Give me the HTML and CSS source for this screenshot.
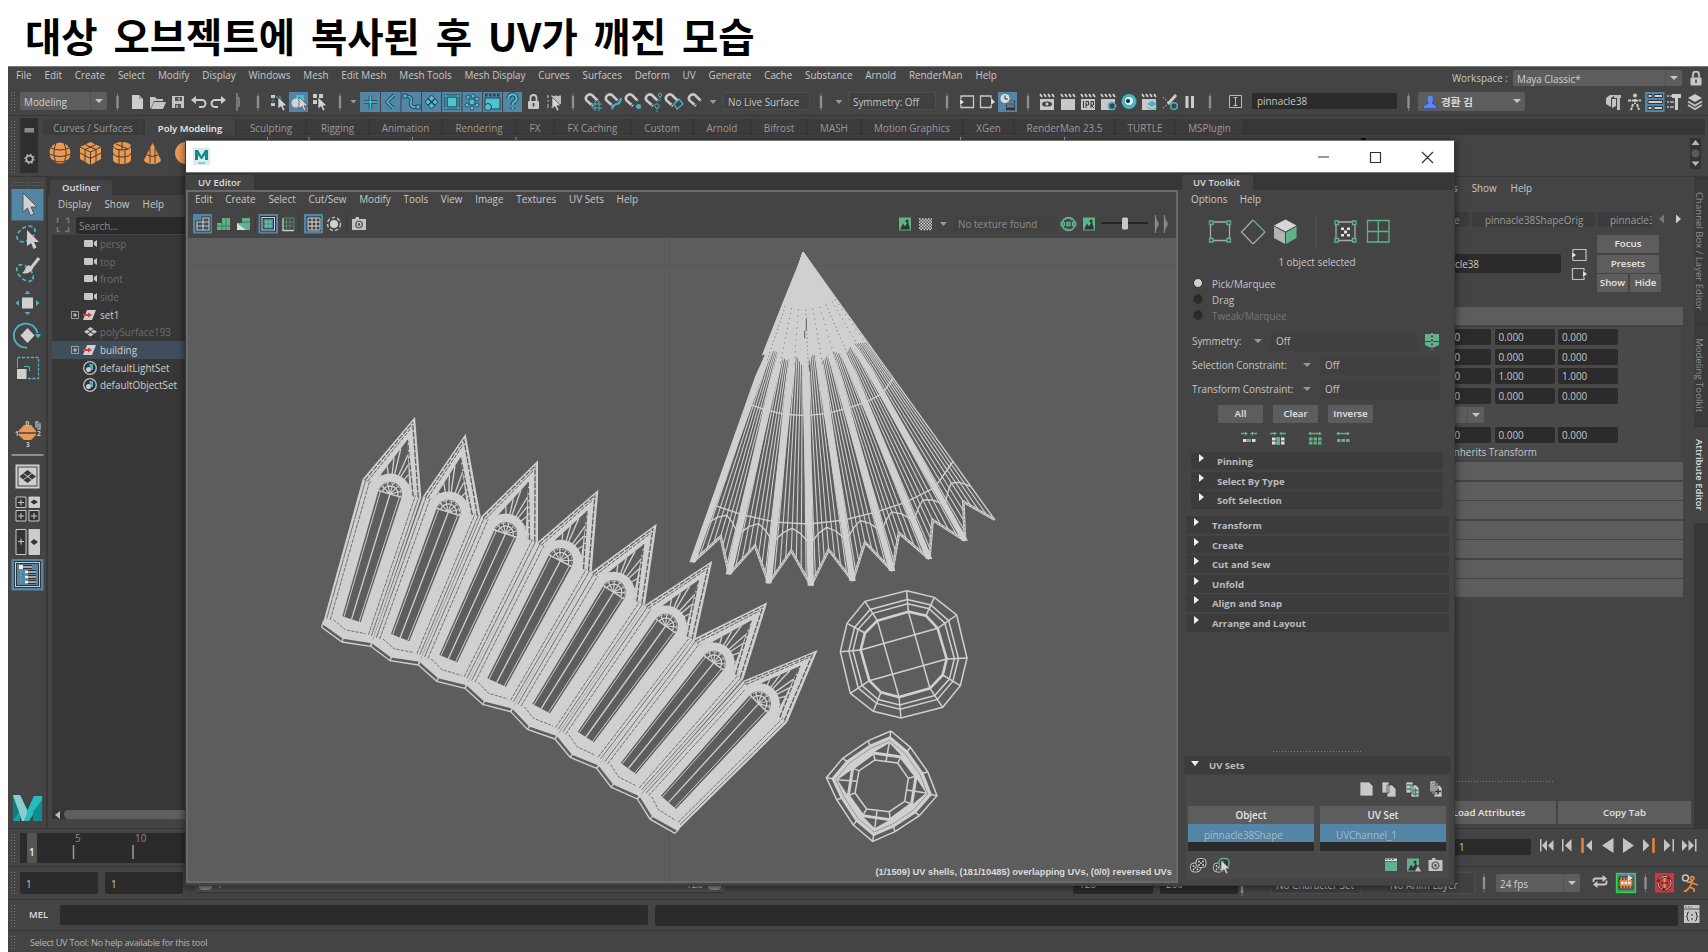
FILE: index.html
```html
<!DOCTYPE html>
<html lang="ko">
<head>
<meta charset="utf-8">
<title>UV Editor</title>
<link rel="stylesheet" href="styles.css">
</head>
<body>
<svg class="defs" width="0" height="0">
  <defs>
    <g id="sep"><path d="M0-9V9" stroke="#777" stroke-width="1"/><path d="M0-6V6" stroke="#909090" stroke-width="2.4"/></g>
    <g id="cursor"><path d="M0 0V12L3 9.5 5 14 7 13 5 8.800H9Z" fill="#d4d4d4" stroke="#3a3a3a" stroke-width=".6"/></g>
    <g id="magnet"><path d="M8 6L1.500 .5A4 4 0 0 1 7-5L13 1" fill="none" stroke="#c8c8c8" stroke-width="2.600" transform="translate(-3 1)"/><path d="M2.500 7L5.500 4.500M8 3L10.500 .5" stroke="#444" stroke-width="1"/></g>
    <g id="clap"><path d="M0-3H14V8H0Z" fill="#c8c8c8"/><path d="M0-8L2-5M4-8L6-5M8-8L10-5M12-8L14-5" stroke="#d0d0d0" stroke-width="1.800"/></g>
    <g id="cam"><rect width="9" height="7" rx="1" fill="#c6c6c6"/><path d="M13 0V7L10 5V2Z" fill="#c6c6c6"/></g>
    <g id="plus"><rect x=".5" y=".5" width="7" height="7" fill="none" stroke="#999"/><path d="M2 4H6M4 2V6" stroke="#ccc"/></g>
    <g id="xform"><path d="M4 0H13L9 10H0Z" fill="#d0cfcb"/><path d="M0 5H6" stroke="#d04040" stroke-width="2"/><path d="M5 2.500L9 5 5 7.500Z" fill="#d04040"/></g>
    <g id="setic"><circle cx="7" cy="7" r="6.300" fill="#333" stroke="#c0c0c0" stroke-width="1.300"/><path d="M6 3H10V9H8Z" fill="#45b3c2"/><circle cx="5.500" cy="8.500" r="2.500" fill="#ccc"/></g>
    <g id="mesh4" fill="#c8c8c8"><path d="M6.500 0L9.500 2 6.500 4 3.500 2ZM3 2.800L6 4.800 3 6.800 0 4.800ZM10 2.800L13 4.800 10 6.800 7 4.800ZM6.500 5.500L9.500 7.500 6.500 9.500 3.500 7.500Z"/></g>
    <g id="photo"><path d="M0-4H3L4-6H7V-4H14V7H0Z" fill="#c4c4c4"/><circle cx="7" cy="1.500" r="4" fill="#666"/><circle cx="7" cy="1.500" r="2.400" fill="#ddd"/><circle cx="7" cy="1.500" r="1.400" fill="#555"/></g>
    <g id="pic"><rect width="12" height="13" fill="#5fb389"/><path d="M1 12L4 6 6 9 9 4 11 12Z" fill="#333"/><circle cx="8" cy="3.500" r="1.500" fill="#333"/></g>
    <g id="lock"><rect y="6" width="11" height="8" rx="1" fill="#c8c8c8"/><path d="M2.500 6V3A3 3 0 0 1 8.500 3V6" fill="none" stroke="#c8c8c8" stroke-width="1.800"/><path d="M5.500 8V11.500" stroke="#444" stroke-width="1.600"/></g>
    <g id="dice"><rect x="0" y="4" width="10" height="9" rx="3.500" fill="#3a3a3a" stroke="#c8c8c8"/><circle cx="3" cy="7" r=".9" fill="#ddd"/><circle cx="7" cy="7" r=".9" fill="#ddd"/><circle cx="5" cy="8.700" r=".9" fill="#ddd"/><circle cx="3" cy="10.500" r=".9" fill="#ddd"/><circle cx="7" cy="10.500" r=".9" fill="#ddd"/></g>
    <g id="vtx" fill="none" stroke="#5fb389" stroke-width="1.300"><path d="M4 1.500H18M4 20H18M1.500 4V18M20.500 4V18" stroke="#aaa"/><path d="M.5.5H4V4H.5ZM18 .5H21.500V4H18ZM.5 18H4V21.500H.5ZM18 18H21.500V21.500H18Z"/></g>
  </defs>
</svg>

<h1 class="title">대상 오브젝트에 복사된 후 UV가 깨진 모습</h1>

<div class="app">
  <header class="menubar">
    <nav class="menu main-menu"><span>File</span><span>Edit</span><span>Create</span><span>Select</span><span>Modify</span><span>Display</span><span>Windows</span><span>Mesh</span><span>Edit Mesh</span><span>Mesh Tools</span><span>Mesh Display</span><span>Curves</span><span>Surfaces</span><span>Deform</span><span>UV</span><span>Generate</span><span>Cache</span><span>Substance</span><span>Arnold</span><span>RenderMan</span><span>Help</span></nav>
    <div class="workspace"><span>Workspace :</span><div class="combo ws-combo"><span>Maya Classic*</span><i></i></div>
      <svg width="12" height="15"><use href="#lock" x=".5" y=".5"/></svg></div>
  </header>

  <div class="statusline">
    <div class="grip-v"></div>
    <div class="combo mode"><span>Modeling</span><i></i></div>
    <svg width="616" height="29" viewBox="107 87 616 29">
      <use href="#sep" x="117.500" y="102"/>
      <path d="M132 95H139L143 99V109H132Z" fill="#ccc"/><path d="M139 95V99H143" fill="#999"/>
      <path d="M150 97H155L157 99H163V101H154L151 108H150Z" fill="#c4c4c4"/><path d="M154 102H166L163 109H151Z" fill="#c4c4c4"/>
      <path d="M172 96H184V108H172Z" fill="#c4c4c4"/><path d="M175 97H182V101H175ZM175 104H181V108H175Z" fill="#555"/><path d="M179 97.500V100.500M177 105V108" stroke="#ddd"/>
      <path d="M194 100H202A3 3 0 0 1 202 107H199" fill="none" stroke="#ccc" stroke-width="2"/><path d="M191 100L196 96V104Z" fill="#ccc"/>
      <path d="M223 100H215A3 3 0 0 0 215 107H218" fill="none" stroke="#ccc" stroke-width="2"/><path d="M226 100L221 96V104Z" fill="#ccc"/>
      <path d="M237 93V111M238.500 97L239.500 102 238.500 107" fill="none" stroke="#888" stroke-width="1.500"/>
      <use href="#sep" x="258" y="102"/>
      <path d="M271 95H275V98H271ZM271 103H275V106H271Z" fill="#ccc"/><path d="M273 97V104M276 97H281V102" stroke="#45b3c2" fill="none" stroke-dasharray="2 1"/><use href="#cursor" x="278" y="97"/>
      <rect x="289" y="92" width="19" height="20" fill="#5285a6"/><path d="M296 95H304V103H296Z" fill="#48bccb"/><circle cx="296" cy="103" r="4.500" fill="#d4d4d4"/><use href="#cursor" x="299" y="97"/>
      <path d="M313 94H317V98H313ZM319 94H323V98H319ZM313 100H317V104H313Z" fill="#ccc"/><use href="#cursor" x="318" y="97"/>
      <use href="#sep" x="340" y="102"/><path d="M350.500 100H356.500L353.500 103.500Z" fill="#999"/>
      <path d="M360 92H380V112H360ZM381 92H400.500V112H381ZM401.500 92H421V112H401.500ZM422 92H441V112H422ZM442 92H461.500V112H442ZM462.500 92H482V112H462.500ZM483 92H502V112H483ZM503 92H522V112H503Z" fill="#5285a6"/>
      <g fill="none" stroke="#2b4250" stroke-width="3.400"><path d="M364 102H377M370.500 95V109M394 95L387 102 393 108M405 96Q413 96 411 102T418 107"/></g>
      <g fill="none" stroke="#4cc4d0" stroke-width="1.600"><path d="M364 102H377M370.500 95V109M394 95L387 102 393 108M405 96Q413 96 411 102T418 107"/></g>
      <path d="M403 94H407V98H403ZM416 105H420V109H416Z" fill="#4cc4d0" stroke="#2b4250"/>
      <path d="M431.500 95L438 102 431.500 109 425 102Z" fill="#4cc4d0" stroke="#2b4250"/><path d="M428 98.500L435 105.500M435 98.500L428 105.500" stroke="#2b4250" stroke-width="1.500"/>
      <path d="M448 98H456V106H448Z" fill="#4cc4d0"/><path d="M446 94V110M458 94V110M444 96H460M444 108H460" stroke="#2b4250" stroke-width="3"/><path d="M446 94V110M458 94V110M444 96H460M444 108H460" stroke="#4cc4d0" stroke-width="1"/>
      <g stroke="#2b4250" fill="#4cc4d0" stroke-width=".8"><circle cx="472" cy="102" r="3"/><circle cx="468" cy="97" r="2"/><circle cx="473" cy="96" r="2"/><circle cx="477" cy="99" r="2"/><circle cx="477" cy="105" r="2"/><circle cx="472" cy="108" r="2"/><circle cx="467" cy="105" r="2"/></g>
      <path d="M485 98H500V109H485Z" fill="#4cc4d0" stroke="#2b4250"/><path d="M485 95H500" stroke="#2b4250" stroke-width="3" stroke-dasharray="2.500 1.500"/><circle cx="488" cy="107" r="3.500" fill="#4cc4d0" stroke="#2b4250"/>
      <path d="M508.500 99A4 4 0 1 1 514 102Q512.500 103 512.500 105M512.500 107V109.500" fill="none" stroke="#2b4250" stroke-width="4"/><path d="M508.500 99A4 4 0 1 1 514 102Q512.500 103 512.500 105M512.500 107V109.500" fill="none" stroke="#4cc4d0" stroke-width="2"/>
      <use href="#lock" x="528" y="95"/>
      <path d="M547 96H562M547 107H553M548 96V107" stroke="#bbb" stroke-dasharray="2 2"/><path d="M552 96H561V104H552Z" fill="#bbb"/><use href="#cursor" x="552" y="97"/>
      <use href="#sep" x="573" y="102"/>
      <use href="#magnet" x="588" y="99"/><path d="M592 104H602M592 108H602M595 101V111M599 101V111" stroke="#45b3c2"/>
      <use href="#magnet" x="608" y="99"/><path d="M612 109Q614 104 617 104T621 98" stroke="#45b3c2" stroke-width="2.200" fill="none"/>
      <use href="#magnet" x="628" y="99"/><circle cx="638.500" cy="106.500" r="2.500" fill="#45b3c2"/>
      <use href="#magnet" x="648" y="99"/><circle cx="660" cy="95" r="1.700" fill="none" stroke="#45b3c2"/><circle cx="657" cy="106" r="2.200" fill="none" stroke="#45b3c2"/><path d="M657 108V112M660 97V102" stroke="#45b3c2" stroke-dasharray="1.500 1"/>
      <use href="#magnet" x="668" y="99"/><path d="M674 104L679 99 683 104 677 109Z" fill="none" stroke="#45b3c2" stroke-width="1.300"/>
      <use href="#magnet" x="691" y="99"/><path d="M709.500 100H716.500L713 104Z" fill="#999"/>
    </svg>
    <div class="field live">No Live Surface</div>
    <svg width="38" height="29" viewBox="810 87 38 29"><use href="#sep" x="821" y="102"/><path d="M835.500 100H842.500L839 104Z" fill="#999"/></svg>
    <div class="field sym">Symmetry: Off</div>
    <svg width="316" height="29" viewBox="936 87 316 29">
      <use href="#sep" x="947" y="102"/>
      <g fill="none" stroke="#c8c8c8" stroke-width="1.300"><path d="M961 99V96H973.500V107.500H961V105M991 98V96H980.500V107.500H991V105"/></g>
      <path d="M960 99L964 102 960 105ZM991 98L995 102 991 105Z" fill="#ddd"/>
      <rect x="998" y="92" width="19" height="20" fill="#5285a6"/><path d="M1006 102H1015M1006 106H1015M1006 109H1015" stroke="#333" stroke-width="2.500"/><path d="M1007 102H1014M1007 106H1014" stroke="#bbb"/><circle cx="1005" cy="98.500" r="4.600" fill="#ddd"/><path d="M1005 95.500V99H1008" stroke="#333" fill="none"/>
      <use href="#sep" x="1028" y="102"/>
      <use href="#clap" x="1040" y="102"/><ellipse cx="1047" cy="104" rx="5" ry="2.600" fill="#444"/><circle cx="1047" cy="104" r="1.500" fill="#ccc"/>
      <use href="#clap" x="1061" y="102"/>
      <use href="#clap" x="1081" y="102"/><path d="M1083.500 101V108M1086 108V101.500H1088.500V105H1086M1091 108V101.500H1093.500V105H1091L1094 108" stroke="#333" fill="none"/>
      <use href="#clap" x="1101" y="102"/><circle cx="1112" cy="106" r="3.500" fill="#444" stroke="#45b3c2" stroke-width="2" stroke-dasharray="2 .8"/>
      <circle cx="1129" cy="101.500" r="7.500" fill="#48b5c4"/><circle cx="1129" cy="101" r="4" fill="#e4f0f0"/><circle cx="1128" cy="101" r="2" fill="#222"/>
      <use href="#clap" x="1142" y="102"/><path d="M1147 104L1152 101 1157 104 1152 107Z" fill="#45b3c2"/><path d="M1147 107L1152 110 1157 107" stroke="#45b3c2" fill="none"/>
      <path d="M1163 97L1169 103M1163 108L1168 104" stroke="#45b3c2" stroke-width="1.300" stroke-dasharray="1.500 1.500"/><path d="M1168 104L1176 95" stroke="#ccc" stroke-width="3"/><circle cx="1174" cy="106" r="3.300" fill="none" stroke="#45b3c2" stroke-width="1.500"/>
      <path d="M1187 96V108M1192.500 96V108" stroke="#ccc" stroke-width="3"/>
      <use href="#sep" x="1210" y="102"/>
      <path d="M1229.500 95.500H1241.500V107.500H1229.500Z" fill="#3c3c3c" stroke="#bbb"/><path d="M1235.500 97V106M1233.500 97.500H1237.500M1233.500 105.500H1237.500" stroke="#bbb" fill="none"/>
    </svg>
    <div class="input objname">pinnacle38</div>
    <svg width="21" height="29" viewBox="1397 87 21 29"><use href="#sep" x="1408.500" y="102"/></svg>
    <div class="combo user"><svg width="14" height="15" viewBox="0 0 14 15"><path d="M4 4A3.300 3.500 0 0 1 10.500 4Q10.500 8 9 9L13.500 12V14.500H.5V12L5.500 9Q4 8 4 4Z" fill="#5c88ee" stroke="#26459c" stroke-width=".6"/></svg><span>경환 김</span><i></i></div>
    <svg width="183" height="29" viewBox="1525 87 183 29">
      <path d="M1606 98L1610 95H1615L1611 98V107L1606 104ZM1612 99H1616V106L1612 108Z" fill="#c4c4c4"/><path d="M1614 95H1621V98H1614ZM1617 98H1620V110H1617Z" fill="#bbb"/>
      <circle cx="1635" cy="95.500" r="2" fill="#ccc"/><path d="M1628 100.500H1641M1635 99V104M1633 104L1631 110M1637 104L1639 110" stroke="#ccc" stroke-width="2" stroke-dasharray="3 .7" fill="none"/>
      <rect x="1645" y="92" width="19.500" height="20" fill="#5285a6"/><g fill="#d0d0d0" stroke="#333"><path d="M1654 94.500H1662.500V97.500H1654ZM1648 100.500H1662.500V103.500H1648ZM1654 106.500H1662.500V109.500H1654ZM1648 94.500H1652V97.500H1648ZM1648 106.500H1652V109.500H1648Z"/></g>
      <path d="M1667 96H1674M1667 102H1674M1667 107H1674" stroke="#bbb" stroke-width="1.500" stroke-dasharray="2 1 5 0"/><path d="M1672 94H1681V98H1672ZM1675 98H1678V110H1675Z" fill="#ccc"/>
      <path d="M1695 94L1702 98 1695 102 1688 98Z" fill="#ccc"/><path d="M1688 101.500L1695 105.500 1702 101.500M1688 105L1695 109 1702 105" fill="none" stroke="#bbb" stroke-width="2"/>
    </svg>
  </div>

  <div class="shelf">
    <div class="grip-v"></div>
    <svg class="shelf-side" width="18" height="55" viewBox="20 118 18 55"><path d="M24.500 128H34V132.500H24.500Z" fill="#8a8a8a"/><circle cx="29.500" cy="159" r="3.200" fill="none" stroke="#bbb" stroke-width="1.500"/><circle cx="29.500" cy="159" r="4.600" fill="none" stroke="#bbb" stroke-width="1.200" stroke-dasharray="1.600 2"/></svg>
    <div class="shelf-main">
      <div class="tabs">
        <span class="t1">Curves / Surfaces</span><span class="t2 on">Poly Modeling</span><span class="t3">Sculpting</span><span class="t4">Rigging</span><span class="t5">Animation</span><span class="t6">Rendering</span><span class="t7">FX</span><span class="t8">FX Caching</span><span class="t9">Custom</span><span class="t10">Arnold</span><span class="t11">Bifrost</span><span class="t12">MASH</span><span class="t13">Motion Graphics</span><span class="t14">XGen</span><span class="t15">RenderMan 23.5</span><span class="t16">TURTLE</span><span class="t17">MSPlugin</span>
      </div>
      <svg width="1662" height="41" viewBox="43 135 1662 41">
        <g fill="#e89a55"><circle cx="60" cy="153" r="10.500"/><path d="M90.500 142L101 147V159L90.500 165 80 159V147Z"/><path d="M113 146A9 4 0 0 1 131 146V160A9 4 0 0 1 113 160Z"/><path d="M152.500 143L161 160A8.500 4 0 0 1 144 160Z"/><circle cx="186" cy="153" r="11"/></g>
        <g fill="none" stroke="#4a3a2c" stroke-width="1"><path d="M51 148Q60 152 69 148M49.500 154Q60 159 70.500 154M52 160Q60 164 68 160M56 143Q52 153 56 163M64 143Q68 153 64 163M80 147L90.500 152 101 147M90.500 152V165M80 153L90.500 158.500 101 153M85 144.500L96 149.500V162M96 144.500L85 149.500V162M113 146A9 4 0 0 0 131 146M113 153A9 4 0 0 0 131 153M119 149V164M125 149V164M122 142V150M116 144L128 149M150 148V163M155 148V163M147 155Q152 158 158 155"/></g>
        <path d="M267.500 137V141M309 137V141M412.500 137V141M516 137V141M960.500 137V141M1064.500 137V141" stroke="#aaa"/><path d="M1361 139H1366" stroke="#111" stroke-width="2"/>
        <rect x="1690" y="138" width="11" height="31" fill="#333"/><path d="M1695.500 140L1699.500 145H1691.500ZM1695.500 166L1699.500 161.500H1691.500Z" fill="#b8b8b8"/><circle cx="1695.500" cy="153.500" r="4" fill="#5a5a5a"/>
      </svg>
    </div>
  </div>

  <main class="work">
    <aside class="toolbox">
      <svg width="39" height="651" viewBox="8 177 39 651">
        <path d="M11 182.500H43M11 185.500H43" stroke="#6a6a6a" stroke-dasharray="1.200 1.800"/>
        <rect x="11.500" y="189" width="32" height="31.500" fill="#5285a6"/><path d="M23 193V212L27.500 208 30.500 215.500 34 214 31 207H37Z" fill="#d0d0d0" stroke="#444" stroke-width=".8"/>
        <ellipse cx="26" cy="234" rx="10" ry="6.500" transform="rotate(-35 26 234)" fill="none" stroke="#45b3c2" stroke-width="1.800" stroke-dasharray="4 2.500"/><path d="M27 230V246L31 243 33.500 249 36.500 247.500 34 242H39Z" fill="#d0d0d0"/>
        <ellipse cx="25" cy="273" rx="10" ry="6" transform="rotate(45 25 273)" fill="none" stroke="#45b3c2" stroke-width="1.800" stroke-dasharray="4 2.500"/><path d="M39 258L31 268" stroke="#ccc" stroke-width="3"/><path d="M29 265L33 269Q28 275 22 273Q25 271 26 267Z" fill="#ccc"/>
        <rect x="22" y="297.500" width="11" height="11" fill="#d0d0d0"/><path d="M27.500 290.500L30.500 294H24.500ZM27.500 315L30.500 312H24.500ZM15.500 303L19 300V306ZM39.500 303L36 300V306Z" fill="#45b3c2"/>
        <path d="M27.500 328L34.500 335.500 27.500 343 20.500 335.500Z" fill="#d0d0d0"/><path d="M27 347.500A12 12 0 1 1 37.500 333" fill="none" stroke="#45b3c2" stroke-width="1.800"/><path d="M35 334H41L38 338.500Z" fill="#45b3c2"/>
        <path d="M17.500 357.500H38.500V378.500H28" fill="none" stroke="#45b3c2" stroke-width="1.300" stroke-dasharray="3 1.500"/><path d="M17.500 358V368M24 366.500H29.500V371" stroke="#45b3c2" fill="none"/><rect x="17" y="369" width="9.500" height="10" fill="#d0d0d0"/>
        <path d="M24 425H31L36 431V435L31 440H24L18.500 435V431Z" fill="#e89a55"/><path d="M18 433H36" stroke="#333" stroke-width="1.300"/><path d="M35 421H39V428H35ZM37 423H41V430H37Z" fill="#aaa" stroke="#444" stroke-width=".5"/>
        <g class="tiny"><text x="25.500" y="426">0</text><text x="15" y="435.500">1</text><text x="37" y="436">2</text><text x="26" y="446.500">3</text></g>
        <path d="M11.500 455H43.500" stroke="#8e8e8e" stroke-width="2"/>
        <rect x="15.500" y="464.500" width="24" height="24" fill="#d0d0d0"/><rect x="18" y="467" width="19" height="19" fill="none" stroke="#444"/><path d="M27.500 470L31.500 473 27.500 476 23.500 473ZM23 473.500L27 476.500 23 479.500 19.500 476.500ZM32 473.500L36 476.500 32 479.500 28.500 476.500ZM27.500 477L31.500 480 27.500 483 23.500 480Z" fill="#3a3a3a"/>
        <g fill="#333" stroke="#c8c8c8"><path d="M16 497H26V507.500H16ZM16 510.500H26V521H16ZM29 510.500H39V521H29Z"/><path d="M29 497H39.500V507.500H29Z" fill="#ccc"/><path d="M16 529.500H26V554.500H16Z"/><path d="M29 529.500H39.500V554.500H29Z" fill="#ccc"/></g>
        <path d="M18 502.500H24M21 499.500V505.500M18 516H24M21 513V519M31 516H37M34 513V519M18 541.500H24M21 538.500V544.500" stroke="#ccc"/><path d="M34 499.500L38 502 34 504.500 30.500 502ZM34 539L38 542 34 545 30.500 542Z" fill="#333"/>
        <rect x="11.500" y="559" width="32" height="31.500" fill="#5285a6"/><rect x="15.500" y="562.500" width="24" height="24" fill="none" stroke="#333" stroke-width="3"/><rect x="15.500" y="562.500" width="24" height="24" fill="none" stroke="#ccc"/>
        <path d="M20 567H32M25 572H36M25 577H36M25 582H36" stroke="#333" stroke-width="4"/><path d="M20 567H32M25 572H36M25 577H36M25 582H36" stroke="#ccc" stroke-width="1.500"/><path d="M19 565H23V569H19ZM25 570.500H28V573.500H25ZM25 575.500H28V578.500H25ZM25 580.500H28V583.500H25Z" fill="#eee"/><path d="M21 569V583" stroke="#aaa" stroke-dasharray="1 1"/>
        <path d="M13 795L20 795 27.500 810 34 796H42V821H33V812L29 821H22L20 815V821H13Z" fill="#12a3a6"/><path d="M13 795H20L28 812 24 821H22Z" fill="#8ccdd0"/><path d="M34 796H42V800L29 821H25L27 812Z" fill="#28bcbc"/><path d="M42 800V821H33V812Z" fill="#0e8c92"/><path d="M13 797L19 812 13 821Z" fill="#0c7d84"/>
      </svg>
    </aside>
    <section class="outliner">
      <div class="dock-tabs"><span class="dock-tab out-tab">Outliner</span></div>
      <nav class="menu out-menu"><span>Display</span><span>Show</span><span>Help</span></nav>
      <div class="search"><svg width="14" height="16" viewBox="0 0 14 16"><path d="M3 1.500H1.500V6M1.500 10V14.500H4M10 1.500H12.500V6M12.500 10V14.500H9" fill="none" stroke="#777" stroke-width="1.500"/></svg><div class="input">Search...</div></div>
      <ul class="tree">
        <li class="dim"><svg width="30" height="14"><use href="#cam" x="15" y="3"/></svg>persp</li>
        <li class="dim"><svg width="30" height="14"><use href="#cam" x="15" y="3"/></svg>top</li>
        <li class="dim"><svg width="30" height="14"><use href="#cam" x="15" y="3"/></svg>front</li>
        <li class="dim"><svg width="30" height="14"><use href="#cam" x="15" y="3"/></svg>side</li>
        <li><svg width="30" height="14"><use href="#plus" x="2" y="3"/><use href="#xform" x="14" y="2"/></svg>set1</li>
        <li class="dim"><svg width="30" height="14"><use href="#mesh4" x="15" y="2"/></svg>polySurface193</li>
        <li class="sel"><svg width="30" height="14"><use href="#plus" x="2" y="3"/><use href="#xform" x="14" y="2"/></svg>building</li>
        <li><svg width="30" height="14"><use href="#setic" x="14" y="0"/></svg>defaultLightSet</li>
        <li><svg width="30" height="14"><use href="#setic" x="14" y="0"/></svg>defaultObjectSet</li>
      </ul>
      <div class="hscroll"><b></b><i></i></div>
    </section>
    <div class="void"></div>
    <section class="attr">
      <nav class="menu attr-menu"><span>s</span><span>Show</span><span>Help</span></nav>
      <div class="attr-tabs"><span class="a1">e</span><span class="a2">pinnacle38ShapeOrig</span><span class="a3">pinnacle3</span>
        <svg width="36" height="14"><path d="M7 2.500V11.500L2 7Z" fill="#777"/><path d="M19 2.500V11.500L24 7Z" fill="#ccc"/></svg></div>
      <div class="attr-head">
        <div class="input">pinnacle38</div>
        <svg width="18" height="34"><g fill="none" stroke="#c0c0c0" stroke-width="1.200"><path d="M2 4V1.500H15V12.500H2V10M13 23V20.500H1.500V31.500H13V29"/></g><path d="M1 4L5 7 1 10ZM12 23L16 26 12 29Z" fill="#ddd"/></svg>
        <div class="attr-btns"><button>Focus</button><button>Presets</button><div><button>Show</button><button>Hide</button></div></div>
      </div>
      <div class="bar"></div>
      <div class="attr-box">
        <div class="nums"><span>0.000</span><span>0.000</span><span>0.000</span></div>
        <div class="nums"><span>0.000</span><span>0.000</span><span>0.000</span></div>
        <div class="nums"><span>1.000</span><span>1.000</span><span>1.000</span></div>
        <div class="nums"><span>0.000</span><span>0.000</span><span>0.000</span></div>
        <div class="combo rot"><i></i></div>
        <div class="nums"><span>0.000</span><span>0.000</span><span>0.000</span></div>
        <div class="inherit">Inherits Transform</div>
      </div>
      <div class="bars"><div class="bar"></div><div class="bar"></div><div class="bar"></div><div class="bar"></div><div class="bar"></div><div class="bar"></div><div class="bar"></div></div>
      <div class="attr-foot"><div class="dots"></div><div class="foot-btns"><button>Load Attributes</button><button>Copy Tab</button></div></div>
    </section>
    <aside class="side-tabs"><span class="s1">Channel Box / Layer Editor</span><span class="s2">Modeling Toolkit</span><span class="s3 on">Attribute Editor</span></aside>
  </main>

  <div class="timeline">
    <div class="grip-v"></div>
    <div class="ticks"><svg width="1380" height="30" viewBox="20 833 1380 30"><rect x="27" y="833" width="10" height="30" fill="#555"/><path d="M73.500 845V859M133 845V859" stroke="#999" stroke-width="1.500"/><g class="tick-num"><text x="75" y="842">5</text><text x="135" y="842">10</text></g><text class="cur" x="29" y="856">1</text></svg></div>
    <div class="input curframe">1</div>
    <svg width="177" height="38" viewBox="1531 829 177 38">
      <g fill="#c4c4c4"><path d="M1540 839H1541.500V851.500H1540ZM1547 840V851L1542 845.500ZM1553.500 840V851L1548 845.500ZM1562 839H1563.500V851.500H1562ZM1571.500 839V851.500L1565 845.500ZM1592 840V851L1586 845.500ZM1613.500 838V853L1602 845.500ZM1623 838V853L1634 845.500ZM1643 839V851.500L1649.500 845.500ZM1664 839V851.500L1670.500 845.500ZM1672.500 839H1674V851.500H1672.500ZM1682 840V851L1687.500 845.500ZM1688.500 840V851L1694 845.500ZM1695 839H1696.500V851.500H1695Z"/></g>
      <path d="M1582.500 838V853M1653.500 838V853" stroke="#e8843a" stroke-width="2.500"/>
    </svg>
  </div>

  <div class="range">
    <div class="grip-v"></div>
    <div class="input r1">1</div><div class="input r2">1</div>
    <div class="slider"><i></i><span>1</span><span class="end">120</span><i></i></div>
    <div class="input r3">120</div><div class="input r4">200</div>
    <svg width="33" height="32" viewBox="1238 868 33 32"><use href="#sep" x="1242" y="888"/></svg>
    <div class="field r5">No Character Set</div><div class="field r6">No Anim Layer</div>
    <svg width="21" height="32" viewBox="1475 868 21 32"><use href="#sep" x="1484" y="884"/></svg>
    <div class="combo fps"><span>24 fps</span><i></i></div>
    <svg width="128" height="32" viewBox="1580 868 128 32">
      <path d="M1593.500 883V881.500Q1593.500 879.500 1595.500 879.500H1603M1606.500 881.500V883.500Q1606.500 885.500 1604.500 885.500H1597" fill="none" stroke="#c8c8c8" stroke-width="1.800"/><path d="M1602.500 876L1607 879.500 1602.500 883ZM1597.500 882L1593 885.500 1597.500 889Z" fill="#c8c8c8"/>
      <rect x="1616.500" y="874.500" width="19" height="19" fill="#5285a6" stroke="#28e028" stroke-width="1.300"/><path d="M1619 878H1633V890H1619Z" fill="#dd8a48" stroke="#333"/><path d="M1619 880H1633M1619 888H1633" stroke="#333" stroke-width="1.500" stroke-dasharray="1.500 1.500"/><path d="M1621 884H1631" stroke="#eee" stroke-width="2.500" stroke-dasharray="2.500 1"/><path d="M1628 876L1633 879 1628 882Z" fill="#ddd"/>
      <use href="#sep" x="1645.500" y="884"/>
      <rect x="1655" y="874" width="19" height="19.500" fill="#d63438"/><circle cx="1664.500" cy="884" r="6.500" fill="none" stroke="#413030" stroke-width="2.500"/><circle cx="1664.500" cy="884" r="6.500" fill="none" stroke="#ccc" stroke-width="1" stroke-dasharray="9 3"/><path d="M1664.500 879V889" stroke="#e89a55" stroke-width="2"/><path d="M1661 884H1668" stroke="#333" stroke-width="1.200"/>
      <circle cx="1685.500" cy="879" r="3" fill="none" stroke="#c8c8c8" stroke-width="1.400"/><path d="M1694 879.500A1.800 1.800 0 1 1 1694 879.400M1687 883H1692L1690 888 1694 890V893M1690 888L1686 892H1684M1692 884L1698 886" fill="none" stroke="#e8843a" stroke-width="1.800"/>
    </svg>
  </div>

  <div class="command">
    <div class="grip-v"></div><label>MEL</label><div class="input mel"></div><div class="input melout"></div>
    <svg width="18" height="20"><rect x="1" y="0" width="15.500" height="18" fill="#c4c4c4"/><path d="M1 4H17" stroke="#555"/><path d="M2 2H9" stroke="#555" stroke-dasharray="1.500 1.500"/><path d="M6 7Q4 7 4.500 9T3 11.500Q5 11.500 4.500 13.500T6 16M12 7Q14 7 13.500 9T15 11.500Q13 11.500 13.500 13.500T12 16M9 9V11M9 13V15" fill="none" stroke="#333"/></svg>
  </div>
  <footer class="help"><div class="grip-v"></div><span>Select UV Tool: No help available for this tool</span></footer>
</div>

<div class="window">
  <div class="titlebar">
    <svg width="18" height="18" viewBox="193 148 18 18"><rect x="193" y="148" width="17" height="17" fill="#d8eceb"/><path d="M195 150H198L201.500 156 205 150H208V160H205V155L202 159H201L198 155V160H195Z" fill="#0c8a8f"/><path d="M198 163H205" stroke="#7bbcbc" stroke-width="1.500"/></svg>
    <svg width="130" height="20" viewBox="1310 146 130 20"><g fill="none" stroke="#333" stroke-width="1.200"><path d="M1318 156H1329M1370.500 151.500H1380.500V161.500H1370.500ZM1422 151L1433 162M1433 151L1422 162"/></g></svg>
  </div>
  <div class="panes">
    <section class="uved">
      <div class="dock-tabs"><span class="dock-tab uv-tab">UV Editor</span></div>
      <div class="uvframe">
        <nav class="menu uv-menu"><span>Edit</span><span>Create</span><span>Select</span><span>Cut/Sew</span><span>Modify</span><span>Tools</span><span>View</span><span>Image</span><span>Textures</span><span>UV Sets</span><span>Help</span></nav>
        <div class="uvbar">
          <svg width="190" height="30" viewBox="188 209 190 30">
            <path d="M193 214H212V233.500H193ZM258.500 214H278V233.500H258.500ZM304 214H323V233.500H304Z" fill="#5285a6"/>
            <g fill="none" stroke="#333" stroke-width="3"><path d="M197 222H203V218H209V230H197ZM203 222V230M197 226H209M203 222H209"/></g>
            <g fill="none" stroke="#d8d8d8" stroke-width="1.100"><path d="M197 222H203V218H209V230H197ZM203 222V230M197 226H209M203 222H209"/></g>
            <path d="M217 223H222V218H230V230H217ZM237 223H242V218H250V230H237Z" fill="#5fb389"/><path d="M217 226H230M226 218V230M222 222V230M242 222H250" stroke="#3c7a5e"/><path d="M237 223L246 230H237Z" fill="#ddd"/>
            <path d="M255.500 214V233M299.500 214V233M346.500 214V233" stroke="#3a3a3a"/>
            <rect x="262" y="217.500" width="12.500" height="12.500" fill="#5285a6" stroke="#2c2c2c" stroke-width="3"/><rect x="262" y="217.500" width="12.500" height="12.500" fill="none" stroke="#d8d8d8"/><path d="M264.500 222H272M264.500 226H272M266.500 220V228M270 220V228" stroke="#5fd39a"/>
            <path d="M283 218V230.500H294" stroke="#ccc" fill="none" stroke-width="1.300"/><path d="M283 218H294V230M286.500 219V229M290 219V229M284 222H293M284 226H293" stroke="#5b8a72" fill="none"/>
            <rect x="307.500" y="217.500" width="12.500" height="12.500" fill="#444" stroke="#2c2c2c" stroke-width="2"/><path d="M308 218H320V230H308ZM308 222H320M308 226H320M312 218V230M316 218V230" stroke="#ddd" fill="none"/>
            <circle cx="334" cy="224" r="4" fill="#d0d0d0"/><circle cx="334" cy="224" r="6.500" fill="none" stroke="#bbb" stroke-width="1.500" stroke-dasharray="3.500 2"/>
            <use href="#photo" x="352" y="223"/>
          </svg>
          <svg width="60" height="30" viewBox="893 209 60 30"><use href="#pic" x="899" y="217.500"/><path d="M919 219H932M919 222H932M919 225H932M919 228H932" stroke="#ddd" stroke-width="1.500" stroke-dasharray="1.500 1.500"/><path d="M920.500 220.500H932M920.500 223.500H932M920.500 226.500H932M920.500 229.500H932" stroke="#ddd" stroke-width="1.500" stroke-dasharray="1.500 1.500"/><path d="M940 222H947L943.500 226Z" fill="#999"/></svg>
          <div class="field tex">No texture found</div>
          <svg width="119" height="30" viewBox="1057 209 119 30"><circle cx="1068.500" cy="224" r="6.500" fill="none" stroke="#5fb389" stroke-width="1.500"/><path d="M1060.500 224H1077" stroke="#5fb389" stroke-width="4.500" stroke-dasharray="4.500 1.200"/><path d="M1062 224H1076" stroke="#35634c" stroke-width="1.200" stroke-dasharray="2 3.700"/><path d="M1065 219.500L1069 218 1072 220.500M1065 228.500L1070 230" stroke="#5fb389" fill="none"/><use href="#pic" x="1083" y="217.500"/><path d="M1101 223H1148" stroke="#262626" stroke-width="2"/><rect x="1122" y="217.500" width="6" height="12" rx="1.500" fill="#c8c8c8"/><path d="M1155.500 215V233M1164.500 215V233" stroke="#888" stroke-width="1.300"/><path d="M1156 218L1159 224 1156 230ZM1165 218L1168 224 1165 230Z" fill="#888"/></svg>
        </div>
        <div class="canvas">
          <svg id="uvmesh" width="988" height="643" viewBox="188 239 988 643"></svg>
          <p class="shells">(1/1509) UV shells, (181/10485) overlapping UVs, (0/0) reversed UVs</p>
        </div>
      </div>
    </section>
    <section class="kit">
      <div class="dock-tabs"><span class="dock-tab kit-tab">UV Toolkit</span></div>
      <nav class="menu kit-menu"><span>Options</span><span>Help</span></nav>
      <svg width="274" height="42" viewBox="1180 210 274 42">
        <use href="#vtx" x="1209" y="220.500"/><path d="M1253 244L1241.500 232 1253 220" fill="none" stroke="#aaa" stroke-width="1.300"/><path d="M1253 220L1265 232" stroke="#5fb389" stroke-width="1.300"/><path d="M1265 232L1253 244" stroke="#aaa" stroke-width="1.300"/>
        <path d="M1285.500 219.500L1296.500 225.500 1285.500 231.500 1274 225.500Z" fill="#d6d6d6"/><path d="M1274 226.500L1285 232.500V244L1274 238Z" fill="#b4b4b4"/><path d="M1286 232.500L1296.500 226.500V238L1286 244Z" fill="#5fb389"/>
        <path d="M1316 216V248" stroke="#525252"/><use href="#vtx" x="1334.500" y="220.500"/><path d="M1341 227.500H1344V230H1341ZM1347 227.500H1350V230H1347ZM1344 230.500H1347V233.500H1344ZM1341 234H1344V236.500H1341ZM1347 234H1350V236.500H1347Z" fill="#e0e0e0"/>
        <path d="M1367.500 220.500H1389V242H1367.500ZM1378.300 220.500V242M1367.500 231.500H1389" fill="none" stroke="#5fb389" stroke-width="1.300"/>
      </svg>
      <p class="selinfo">1 object selected</p>
      <ul class="radios"><li class="on"><i></i>Pick/Marquee</li><li><i></i>Drag</li><li class="dim"><i></i>Tweak/Marquee</li></ul>
      <div class="opt o1"><label>Symmetry:</label><b></b><div class="field">Off</div><svg width="16" height="17" viewBox="0 0 16 17"><path d="M1 1H7V8H1ZM9 1H15V8H9ZM1 9H7V15L1 12ZM9 9H15V12L9 15Z" fill="#5fb389"/><path d="M8 0V16.500" stroke="#ddd" stroke-dasharray="2.500 1.500"/></svg></div>
      <div class="opt o2"><label>Selection Constraint:</label><b></b><div class="field">Off</div></div>
      <div class="opt o2"><label>Transform Constraint:</label><b></b><div class="field">Off</div></div>
      <div class="trio"><button>All</button><button>Clear</button><button>Inverse</button></div>
      <svg class="growicons" width="274" height="20" viewBox="1180 428 274 20">
        <g stroke="#5fb389" stroke-width="1.300" fill="#5fb389"><path d="M1241 433.500H1246M1252 433.500H1257M1270 433.500H1275M1281 433.500H1286M1310 433.500H1320M1338 433.500H1348"/><path d="M1245 431.500L1248 433.500 1245 435.500ZM1253 431.500L1250 433.500 1253 435.500ZM1274 431.500L1277 433.500 1274 435.500ZM1282 431.500L1279 433.500 1282 435.500ZM1311 431.500L1308 433.500 1311 435.500ZM1319 431.500L1322 433.500 1319 435.500ZM1339 431.500L1336 433.500 1339 435.500ZM1347 431.500L1350 433.500 1347 435.500Z" stroke="none"/></g>
        <path d="M1243 440.500H1256M1272 439H1284.500M1272 443H1284.500" stroke="#ddd" stroke-width="3" stroke-dasharray="3.500 1"/><path d="M1247.500 440.500H1251M1276.500 439H1280M1276.500 443H1280M1309 439H1321.500M1309 443H1321.500M1337 440.500H1349.500" stroke="#5fb389" stroke-width="3" stroke-dasharray="3.500 1"/>
      </svg>
      <div class="folds inner"><div>Pinning</div><div>Select By Type</div><div>Soft Selection</div></div>
      <div class="folds"><div>Transform</div><div>Create</div><div>Cut and Sew</div><div>Unfold</div><div>Align and Snap</div><div>Arrange and Layout</div></div>
      <div class="kit-foot">
        <div class="dots"></div>
        <div class="sets-head">UV Sets</div>
        <div class="sets">
          <svg width="263" height="31" viewBox="1186 775 263 31">
            <g fill="#c8c8c8" stroke="#444" stroke-width=".7"><path d="M1360 782H1369L1373 786V796H1360Z"/><path d="M1382 782H1389V793H1382ZM1387 785H1392L1396 789V797H1387Z"/><path d="M1406 782H1413V793H1406ZM1411 785H1416L1419 788V797H1411Z"/><path d="M1430 781H1436V792H1430ZM1432 783H1438V794H1432ZM1434 785H1439L1442 788V797H1434Z"/></g>
            <path d="M1407 785H1411M1407 789H1411M1412.500 790.500H1418M1412.500 794H1418M1415.500 788V796" stroke="#2f8f60" stroke-width="1.300"/><path d="M1435.500 791.500H1441M1438.200 789V794" stroke="#333" stroke-width="1.300"/>
          </svg>
          <div class="tables"><div class="tbl"><b>Object</b><span>pinnacle38Shape</span></div><div class="tbl"><b>UV Set</b><span>UVChannel_1</span></div></div>
          <svg width="263" height="28" viewBox="1186 852 263 28">
            <use href="#dice" x="1190.500" y="860"/><use href="#dice" x="1196" y="855.500"/><use href="#dice" x="1213.500" y="860"/><rect x="1219" y="859.500" width="10" height="9" rx="3.500" fill="#3a3a3a" stroke="#5fb389" stroke-width="1.300"/><circle cx="1223" cy="863" r="1" fill="#5fb389"/><use href="#cursor" x="1221" y="861"/>
            <path d="M1385 862.500H1397V872H1385Z" fill="#5fb389"/><path d="M1385 859.500H1397V862H1385Z" fill="#ddd"/><path d="M1386 860.500H1394" stroke="#444" stroke-dasharray="1.500 1.500"/>
            <use href="#pic" x="1407" y="859.500"/><path d="M1418 866L1422 873H1414Z" fill="#bbb" stroke="#444"/><use href="#photo" x="1428.500" y="865"/>
          </svg>
        </div>
      </div>
    </section>
  </div>
</div>
<script src="mesh.js"></script>
</body>
</html>
```
FILE: styles.css
```css
* { box-sizing: border-box; margin: 0; padding: 0; }
body { width: 1708px; height: 952px; overflow: hidden; background: #fff; position: relative; font: 9.9px/14px "Open Sans", "Noto Sans", "Noto Sans CJK KR", sans-serif; color: #c6c6c6; }
.defs { position: absolute; }
svg { display: block; flex: none; }
ul { list-style: none; }
button { font: 600 9.7px/14px "Open Sans", sans-serif; color: #e4e4e4; background: #5d5d5d; border: 0; border-radius: 1px; text-align: center; white-space: nowrap; }
.title { height: 66px; padding: 0 0 0 25px; font: 700 39.500px/69px "Noto Sans CJK KR", sans-serif; color: #000; white-space: nowrap; word-spacing: 4.700px; }
.app { margin-left: 8px; width: 1700px; height: 886px; background: #444; border-top: 1px solid #777; display: flex; flex-direction: column; }
.app > * { flex: none; display: flex; }
.menu { display: flex; justify-content: space-between; white-space: nowrap; color: #c8c8c8; }
.menubar { height: 20px; align-items: center; justify-content: space-between; padding: 0 6px 0 8px; }
.main-menu { width: 981px; padding-bottom: 4px; }
.workspace { display: flex; align-items: center; padding-top: 2px; }
.workspace > span { margin-right: 7px; width: 54px; white-space: nowrap; }
.workspace svg { margin-left: 8px; }
.combo { display: flex; align-items: center; background: #5d5d5d; border-radius: 2px; color: #d0d0d0; white-space: nowrap; }
.combo span { flex: 1; padding: 1px 0 0 4px; }
.combo i { align-self: stretch; width: 17px; border-left: 1px solid #515151; display: flex; align-items: center; justify-content: center; }
.combo i::before { content: ""; border: 4px solid transparent; border-top: 4.500px solid #c8c8c8; border-bottom: 0; }
.ws-combo { width: 169px; height: 16px; }
.grip-v { flex: none; width: 5px; margin: 4px 5px 3px 2px; background: radial-gradient(circle, #777 .6px, transparent 1px) 0 0/3px 3px; }
.statusline { height: 29px; align-items: center; border-bottom: 1px solid #363636; }
.statusline .grip-v { align-self: stretch; }
.mode { width: 87px; height: 18px; }
.field { height: 18px; border: 1px solid #4d4d4d; background: #404040; border-radius: 2px; padding: 2px 0 0 4px; color: #c6c6c6; white-space: nowrap; }
.live { width: 87px; } .sym { width: 88px; }
.input { background: #2b2b2b; border-radius: 2px; padding-left: 5px; color: #c6c6c6; white-space: nowrap; }
.objname { width: 145px; height: 16px; line-height: 17px; }
.user { width: 107px; height: 19px; padding-left: 5px; font: 700 10.500px/18px "Noto Sans CJK KR", sans-serif; color: #ddd; }
.user i { border: 0; }
.shelf { height: 61px; border-bottom: 1px solid #383838; }
.shelf-side { background: #2f2f2f; margin: 2px 5px 0 0; }
.shelf-main { padding-top: 3px; width: 1662px; }
.tabs { display: flex; gap: 2px; height: 16px; background: #373737; }
.tabs span { background: #3c3c3c; color: #9a9a9a; text-align: center; line-height: 19px; border-radius: 2px 2px 0 0; white-space: nowrap; flex: none; }
.tabs .on { background: #444; color: #eee; font-weight: 600; font-size: 9.500px; }
.t1 { width: 100px; } .t2 { width: 90px; } .t3 { width: 68px; } .t4 { width: 61px; } .t5 { width: 71px; } .t6 { width: 72px; } .t7 { width: 36px; } .t8 { width: 75px; } .t9 { width: 60px; } .t10 { width: 56px; } .t11 { width: 54px; } .t12 { width: 52px; } .t13 { width: 100px; } .t14 { width: 49px; } .t15 { width: 99px; } .t16 { width: 58px; } .t17 { width: 67px; }
.work { height: 651px; }
.toolbox { width: 40px; border-right: 2px solid #383838; }
.outliner { width: 160px; display: flex; flex-direction: column; }
.dock-tabs { height: 16px; flex: none; background: #373737; display: flex; align-items: flex-end; }
.dock-tab { height: 15px; background: #444; border-radius: 2px 2px 0 0; color: #ddd; font-weight: 600; font-size: 9.500px; line-height: 16px; white-space: nowrap; }
.out-tab { margin-left: 2px; width: 62px; padding-left: 12px; }
.outliner .dock-tabs { height: 18px; }
.out-menu { width: 106px; margin: 2px 0 0 10px; }
.search { display: flex; gap: 6px; padding-left: 8px; margin-top: 6px; }
.search .input { width: 110px; height: 17px; padding: 2px 0 0 3px; color: #8d8d8d; }
.tree { margin: 1px 0 0 4px; background: #373737; height: 576px; flex: none; }
.tree li { height: 17.700px; display: flex; align-items: center; gap: 1px; padding-left: 17px; color: #d0d0d0; white-space: nowrap; }
.tree .dim { color: #6d6d6d; }
.tree .sel { background: #404d5b; }
.hscroll { display: flex; align-items: center; height: 9px; margin-left: 4px; padding-left: 3px; background: #333; margin-top: -1px; gap: 4px; flex: none; }
.hscroll b { border: 4px solid transparent; border-right: 5px solid #bbb; border-left: 0; }
.hscroll i { flex: 1; height: 9px; border-radius: 5px 0 0 5px; background: #5f5f5f; }
.void { width: 1192px; background: #444; }
.attr { width: 294px; display: flex; flex-direction: column; }
.attr-menu { width: 79px; margin: 4px 0 0 53px; }
.attr-tabs { display: flex; gap: 3px; margin-top: 17px; height: 15px; }
.attr-tabs span { background: #3c3c3c; color: #9a9a9a; line-height: 16px; overflow: hidden; white-space: nowrap; }
.a1 { width: 69px; padding-left: 54px; } .a2 { width: 123px; padding-left: 13px; } .a3 { width: 54px; padding-left: 12px; }
.attr-tabs svg { margin-left: 2px; }
.attr-head { display: flex; margin-top: 8px; height: 58px; }
.attr-head .input { width: 141px; margin: 19px 0 0 20px; height: 19px; line-height: 20px; padding: 0 82px 0 0; text-align: right; direction: rtl; }
.attr-head svg { margin: 13px 0 0 10px; }
.attr-btns { margin-left: 8px; width: 64px; display: flex; flex-direction: column; gap: 1.500px; }
.attr-btns button { height: 18px; width: 62px; line-height: 18px; }
.attr-btns div { display: flex; gap: 2px; }
.attr-btns div button { width: 31px; }
.bar { height: 18px; width: 283px; background: #5d5d5d; border-radius: 1px; }
.attr-head + .bar { margin-top: 14px; flex: none; }
.attr-box { width: 281px; height: 133px; margin: 2px 0; background: #494949; padding: 2px 0 0 31px; flex: none; }
.nums { display: flex; gap: 3.500px; height: 16px; margin-bottom: 3.500px; }
.nums span { width: 60px; background: #2b2b2b; border-radius: 2px; padding-left: 4px; line-height: 17px; }
.rot { width: 53px; height: 16px; margin-bottom: 3.500px; }
.rot i { margin-left: auto; }
.inherit { padding-left: 20px; line-height: 13px; }
.bars { display: flex; flex-direction: column; gap: 1.500px; }
.attr-foot { margin-top: auto; padding-bottom: 4px; }
.dots { height: 3px; background: radial-gradient(circle, #7c7c7c .6px, transparent 1px) 0 0/3px 3px; }
.attr-foot .dots { width: 100px; margin: 0 0 18px 55px; }
.foot-btns { display: flex; gap: 2px; }
.foot-btns button { height: 23px; width: 133px; }
.foot-btns button:first-child { width: 156px; padding-left: 22px; }
.side-tabs { width: 14px; background: #373737; padding-top: 3px; display: flex; flex-direction: column; gap: 2px; }
.side-tabs span { writing-mode: vertical-rl; background: #3b3b3b; color: #8f8f8f; text-align: center; width: 14px; line-height: 11px; padding-right: 3px; white-space: nowrap; font-size: 9.600px; }
.s1 { height: 143px; } .s2 { height: 100px; } .s3 { height: 96px; }
.side-tabs .on { background: #444; color: #ddd; font-weight: 600; font-size: 9.500px; }
.timeline { height: 39px; border-top: 1px solid #363636; border-bottom: 1px solid #383838; }
.ticks { width: 1380px; background: #2b2b2b; height: 30px; margin-top: 4px; }
.ticks text { font-size: 9.900px; fill: #8c8c8c; } .ticks .cur { fill: #eee; font-weight: 600; }
.tiny text { font: 700 6.500px "Open Sans", sans-serif; fill: #ccc; }
.curframe { width: 91px; margin: 10px 0 0 40px; height: 16px; padding-left: 19px; line-height: 17px; }
.range { height: 33px; border-bottom: 1px solid #363636; align-items: center; }
.range .grip-v, .command .grip-v, .help .grip-v { align-self: stretch; }
.range .input { height: 22px; line-height: 24px; padding-left: 6px; flex: none; }
.r1 { width: 78px; margin-right: 7px; } .r2 { width: 78px; margin-right: 10px; }
.slider { width: 534px; height: 17px; margin-top: 2px; background: #4f4f4f; border: 1px solid #3a3a3a; border-radius: 4px; display: flex; align-items: center; gap: 5px; padding: 0 5px; line-height: 12px; }
.slider i { width: 13px; height: 12px; border-radius: 4px; background: #888; }
.slider .end { margin-left: auto; }
.range .input.r3, .range .input.r4 { line-height: 25px; }
.r3 { width: 80px; margin: 0 7px 0 346px; } .r4 { width: 78px; }
.range .field { height: 22px; line-height: 20px; flex: none; }
.r5 { width: 90px; margin-right: 24px; } .r6 { width: 90px; }
.fps { width: 84px; height: 18px; }
.command { height: 31px; align-items: center; border-bottom: 1px solid #363636; }
.command label { width: 40px; padding-left: 9px; color: #ddd; font-weight: 600; font-size: 9.500px; }
.mel { width: 588px; height: 20px; margin-right: 7px; } .melout { width: 1023px; height: 21px; }
.command svg { margin-left: 5px; }
.help { height: 21px; color: #b4b4b4; font: 9.200px/24px "Open Sans", sans-serif; letter-spacing: -.29px; }
.help span { padding-left: 10px; white-space: nowrap; }

.window { position: absolute; left: 185px; top: 140px; width: 1270px; height: 746px; background: #444; border: 1px solid #3a3a3a; border-top-color: #777; box-shadow: 0 1px 8px rgba(0,0,0,.6); display: flex; flex-direction: column; }
.titlebar { height: 32px; flex: none; background: #fff; border-bottom: 1px solid #777; display: flex; align-items: center; justify-content: space-between; padding: 0 14px 0 7px; }
.panes { flex: 1; display: flex; min-height: 0; padding-top: 1px; background: #373737; }
.uved { width: 992px; display: flex; flex-direction: column; background: #444; }
.uv-tab { width: 68px; padding-left: 12px; }
.uvframe { flex: 1; border: 2px solid #6a6a6a; margin-bottom: 2px; display: flex; flex-direction: column; background: #444; min-height: 0; }
.uv-menu { width: 443px; margin: 0 0 0 7px; height: 17px; flex: none; line-height: 15px; }
.uvbar { height: 29px; display: flex; flex: none; align-items: center; }
.uvbar svg:nth-child(2) { margin-left: auto; }
.tex { width: 104px; color: #8d8d8d; border-color: #434343; background: #414141; height: 16px; padding-top: 0; }
.canvas { flex: 1; background: #5d5d5d; position: relative; min-height: 0; overflow: hidden; }
.shells { position: absolute; right: 4px; bottom: 3px; font: 700 9.300px/12px "Liberation Sans", sans-serif; color: #dcdcdc; white-space: nowrap; }
.kit { flex: 1; display: flex; flex-direction: column; min-width: 0; padding-left: 2px; background: #444; }
.kit .dock-tabs { margin-left: -2px; }
.kit-tab { margin-left: 4px; width: 71px; padding-left: 11px; }
.kit-menu { width: 70px; margin: 2px 0 4px 11px; }
.selinfo { text-align: center; margin: 3px 0 7px; width: 274px; }
.radios li { display: flex; align-items: center; height: 16px; padding-left: 13px; }
.radios i { width: 10px; height: 10px; border-radius: 50%; background: #2b2b2b; border: 1px solid #333; margin: -2px 9px 0 0; }
.radios .on i { background: #d0d0d0; border: 1.500px solid #2b2b2b; }
.radios .dim { color: #777; }
.opt { display: flex; align-items: center; padding-left: 12px; height: 24px; }
.opt label { width: 62px; white-space: nowrap; } .o2 label { width: 111px; }
.o1 { margin-top: 5px; height: 24px; }
.opt b { border: 4px solid transparent; border-top: 4.500px solid #999; border-bottom: 0; margin-right: 9px; }
.opt .field { width: 146px; height: 20px; border: 0; background: #404040; line-height: 17px; padding-left: 5px; }
.o2 .field { width: 120px; }
.o1 svg { margin-left: 7px; }
.trio { display: flex; gap: 10px; padding: 4px 0 0 38px; }
.trio button { width: 45px; height: 18px; line-height: 18px; }
.growicons { margin-top: 5px; }
.folds { display: flex; flex-direction: column; gap: 1.500px; margin: 7px 0 0 6px; width: 263px; font-weight: 700; font-size: 9.500px; color: #bdbdbd; }
.folds div { height: 18px; background: #3c3c3c; border-radius: 2px; padding: 3px 0 0 8px; display: flex; }
.folds div::before { content: ""; height: 0; border: 4.500px solid transparent; border-left: 5px solid #eee; border-right: 0; margin: -1px 13px 0 0; }
.inner { margin: 4px 0 0 11px; width: 252px; }
.kit-foot { margin-top: auto; padding: 0 0 6px 4px; }
.kit-foot .dots { width: 90px; margin: 0 0 3px 88px; height: 3px; }
.sets-head { width: 266px; height: 18px; background: #3c3c3c; border-radius: 2px; display: flex; padding: 3px 0 0 7px; font-weight: 700; font-size: 9.500px; color: #bdbdbd; }
.sets-head::before { content: ""; height: 0; border: 4.500px solid transparent; border-top: 5px solid #eee; border-bottom: 0; margin: 2px 10px 0 0; }
.sets { margin: 1px 0 0 2px; width: 263px; background: #494949; }
.tables { display: flex; gap: 6px; padding-left: 2px; height: 45px; }
.tbl { width: 126px; background: #2b2b2b; }
.tbl b { display: block; height: 18px; background: #5d5d5d; text-align: center; font-weight: 600; line-height: 19px; color: #e4e4e4; }
.tbl span { display: block; height: 18px; background: #5285a6; padding-left: 16px; line-height: 22px; color: #a9bac4; }
```
FILE: mesh.js
```javascript
// Builds the UV wireframe shown on the canvas.
(function () {
  var LIGHT = '#d0d0d0', DARK = '#5d5d5d', out = [];
  function lerp(a, b, t) { return [a[0] + (b[0] - a[0]) * t, a[1] + (b[1] - a[1]) * t]; }
  function d(pts) { return 'M' + pts.map(function (p) { return p[0].toFixed(1) + ' ' + p[1].toFixed(1); }).join('L'); }
  function fill(pts, c) { out.push('<path d="' + d(pts) + 'Z" fill="' + (c || LIGHT) + '"/>'); }
  function line(pts, w, c, dash) {
    out.push('<path d="' + d(pts) + '" fill="none" stroke="' + (c || LIGHT) + '" stroke-width="' + (w || 3) + '"' + (dash ? ' stroke-dasharray="' + dash + '"' : '') + '/>');
  }
  function loop(pts, w, c) { line(pts.concat([pts[0]]), w, c); }
  function group(x, y, draw) { out.push('<g transform="translate(' + x + ' ' + y + ') scale(.33333)">'); draw(); out.push('</g>'); }

  out.push('<path d="M188 266.500H1176M669.500 239V882" stroke="#575757"/>');

  // Wall panels: base left, left shoulder, peak, right shoulder, base right, then the four window corners.
  var panels = [
    [[35,685],[158,240],[315,53],[334,295],[182,742],[205,275],[275,295],[152,670],[97,652]],
    [[182,742],[340,290],[467,104],[512,352],[325,798],[380,328],[450,350],[298,727],[243,705]],
    [[325,798],[514,352],[684,184],[684,430],[465,868],[553,393],[620,415],[442,790],[388,768]],
    [[465,868],[682,430],[865,272],[845,520],[602,938],[717,468],[785,503],[588,863],[532,838]],
    [[602,938],[843,520],[1040,374],[1005,618],[735,1020],[880,560],[942,600],[720,943],[667,915]],
    [[735,1020],[1005,618],[1207,485],[1155,725],[860,1108],[1037,660],[1097,702],[852,1030],[803,998]],
    [[860,1108],[1150,720],[1372,610],[1300,840],[982,1200],[1182,770],[1240,813],[978,1125],[932,1092]],
    [[982,1200],[1300,845],[1523,753],[1432,970],[1095,1303],[1320,888],[1372,940],[1098,1230],[1053,1190]]
  ];
  group(310, 400, function () {
    panels.forEach(function (p) {
      var bl = p[0], ls = p[1], pk = p[2], rs = p[3], br = p[4], tl = p[5], tr = p[6], hr = p[7], hl = p[8], i;
      var c = lerp(tl, tr, .5), up = 1 / Math.hypot(ls[0] - bl[0], ls[1] - bl[1]);
      var ax = [(ls[0] - bl[0]) * up, (ls[1] - bl[1]) * up];
      function lift(pt, n) { return [pt[0] + ax[0] * n, pt[1] + ax[1] * n]; }
      var mid = lift(lerp(bl, br, .45), -19);
      fill([lift(bl, 10), ls, rs, lift(br, 10), lift(mid, 10)]);
      line([bl, mid, br], 4);
      line([bl, lift(bl, 20)], 4); line([mid, lift(mid, 20)], 4); line([br, lift(br, 20)], 4);
      line([lift(lerp(bl, br, .18), 34), lift(mid, 38), lift(lerp(bl, br, .84), 30)], 2.5, DARK, '9 4');
      [.05, .12, .9, .96].forEach(function (t, k) {
        line([lift(lerp(bl, br, t), 30), lerp(ls, rs, t)], 2.5, DARK, k === 1 || k === 2 ? '12 3' : '60 2');
      });
      // gable
      fill([ls, pk, rs]);
      var ai = lerp(pk, c, .3);
      line([lerp(ls, c, .08), lerp(pk, c, .07)], 3.5, DARK, '16 4');
      line([lerp(ls, c, .17), lerp(pk, c, .14)], 3, DARK, '12 4');
      line([lerp(rs, c, .1), lerp(pk, c, .09)], 4, DARK, '16 4');
      line([lerp(rs, c, .26), lerp(pk, c, .3)], 4, DARK, '16 4');
      var l = lerp(ai, lerp(tl, ls, .4), .95), r = lerp(ai, lerp(tr, rs, .4), .95);
      fill([ai, l, r], DARK);
      for (i = 0; i <= 4; i++) { line([c, lerp(l, ai, i / 5)], 4); line([c, lerp(r, ai, i / 5.5)], 4); }
      // arch
      var rad = Math.hypot(tr[0] - tl[0], tr[1] - tl[1]) / 2, a0 = Math.atan2(tl[1] - tr[1], tl[0] - tr[0]), arc = [], outer = [], a;
      for (i = 0; i <= 12; i++) {
        a = a0 + Math.PI * i / 12;
        arc.push([c[0] + Math.cos(a) * rad, c[1] + Math.sin(a) * rad]);
        outer.push([c[0] + Math.cos(a) * (rad + 27), c[1] + Math.sin(a) * (rad + 25)]);
      }
      fill(outer); fill(arc, DARK);
      arc.forEach(function (pt, n) { if (n % 2 === 0) line([c, pt], 3.5); });
      line(arc.map(function (pt) { return lerp(c, pt, .66); }), 4);
      line(arc.map(function (pt) { return lerp(c, pt, .92); }), 3, LIGHT, '5 4');
      // window opening
      fill([tl, tr, hr, hl], DARK);
      line([tl, tr], 4);
      line([c, lerp(hl, hr, .5)], 4);
      line([lerp(tl, tr, .09), lerp(hl, hr, .09)], 3); line([lerp(tl, tr, .91), lerp(hl, hr, .91)], 3);
    });
  });

  // Spire
  group(680, 240, function () {
    var apex = [369,40];
    var tips = [[38,970],[147,1006],[266,1033],[393,1040],[518,1026],[637,996],[748,960],[855,905],[944,842]];
    var vals = [[122,893],[225,920],[334,935],[446,932],[555,910],[657,882],[758,843],[850,788]];
    var i, j, t;
    fill([apex, [310,185], [245,350], [285,335], [320,365], [345,345], [372,390], [400,345], [430,365], [455,335], [495,350], [515,315], [560,310], [455,165]]);
    for (i = 0; i < 8; i++) {
      for (j = 1; j <= 7; j++) {
        t = j / 8;
        line([apex, t < .5 ? lerp(tips[i], vals[i], t * 2) : lerp(vals[i], tips[i + 1], t * 2 - 1)], 3.3);
      }
      line([tips[i], vals[i], tips[i + 1]], 8);
      line([tips[i], vals[i], tips[i + 1]], 1.5, DARK, '8 4');
      [.49, .815].forEach(function (k) { line([lerp(apex, tips[i], k), lerp(apex, tips[i + 1], k * (i === 7 ? .96 : 1))], 4); });
      var a = lerp(apex, tips[i], .875), b = lerp(apex, tips[i + 1], .875), m = lerp(apex, vals[i], .925);
      line([a, lerp(a, m, .55), m, lerp(b, m, .55), b].map(function (p, n) { return n === 1 || n === 3 ? [p[0], p[1] - 6] : p; }), 4);
    }
    tips.forEach(function (p, n) {
      if (n === 8) { line([apex, p], 4); return; }
      var q = lerp(apex, p, .4);
      fill([[apex[0] - 4, apex[1] + 60], [apex[0] + 4, apex[1] + 60], [q[0] + 11, q[1]], [p[0] + 9, p[1]], [p[0] - 10, p[1]], [q[0] - 11, q[1]]]);
    });
    for (i = 0; i < 9; i++) {
      line([lerp(apex, lerp(tips[i], vals[Math.min(i, 7)], .4), .18), lerp(apex, lerp(tips[i], vals[Math.min(i, 7)], .4), .36)], 2.5, DARK, '3 ' + (9 + i % 3 * 3));
    }
    line([[379,240],[379,275]], 3, DARK); line([[374,275],[374,298]], 3, DARK); line([[389,375],[389,398]], 3, DARK);
  });

  // Round cap and square base
  group(800, 570, function () {
    var o = [[320,65],[403,85],[470,138],[501,267],[481,350],[428,415],[303,447],[220,427],[151,373],[121,248],[141,163],[195,97]];
    var n = [[325,128],[378,140],[413,178],[440,270],[428,318],[390,358],[297,384],[243,370],[208,335],[182,243],[195,192],[232,155]];
    function ring(t) { return o.map(function (p, i) { return lerp(p, n[i], t); }); }
    loop(o, 4.5); loop(ring(.42), 4.5); loop(ring(.62), 4.5); loop(n, 8);
    o.forEach(function (p, i) { line([p, n[i]], 4.5); });
    [[0,5],[11,6],[9,2],[8,3]].forEach(function (e) { line([n[e[0]], n[e[1]]], 4.5); });

    var q = [[273,486],[331,535],[383,608],[411,680],[358,740],[285,788],[218,817],[160,768],[110,692],[79,626],[128,568],[205,515]];
    var mid = [245,652];
    loop(q, 4.5);
    q.forEach(function (p) { line([p, lerp(p, mid, .12)], 4.5); });
    fill(q.map(function (p) { return lerp(p, mid, .09); }));
    loop(q.map(function (p) { return lerp(p, mid, .17); }), 1.5, DARK);
    // corner pockets between the frame and the octagon
    fill([[268,522],[222,550],[306,562]], DARK);
    fill([[378,672],[348,626],[335,708]], DARK);
    fill([[224,778],[188,742],[270,752]], DARK);
    fill([[113,632],[158,600],[145,682]], DARK);
    var oct = [[220,552],[303,564],[348,622],[335,705],[270,752],[188,740],[145,680],[158,598]];
    var inn = [[225,573],[293,582],[325,628],[314,697],[268,728],[200,720],[165,672],[177,605]];
    fill(oct, DARK);
    loop(oct, 9); loop(inn, 4.5);
    oct.forEach(function (p, i) { line([p, inn[i]], 4.5); });
    line([[268,520],[258,577]], 4.5); line([[378,672],[320,663]], 4.5); line([[224,780],[231,725]], 4.5); line([[113,632],[170,637]], 4.5);
  });

  document.getElementById('uvmesh').innerHTML = out.join('');
})();
```
